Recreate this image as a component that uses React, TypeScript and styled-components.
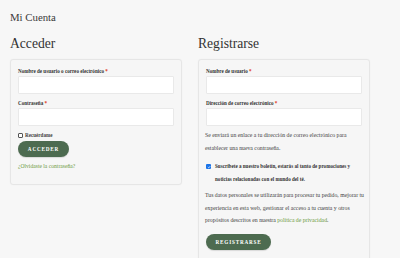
import React from "react";
import styled, { createGlobalStyle } from "styled-components";

const Global = createGlobalStyle`
  html, body { margin: 0; padding: 0; background: #f7f7f7; }
  body { font-family: "Liberation Serif", "DejaVu Serif", serif; color: #444; }
  * { box-sizing: border-box; }
`;

const Page = styled.div`
  padding: 11px 10px 0 10px;
  width: 400px;
  height: 258px;
  overflow: hidden;
`;

const PageTitle = styled.h1`
  margin: 0;
  font-size: 10.8px;
  line-height: 12px;
  font-weight: 400;
  color: #3a3a3a;
`;

const Columns = styled.div`
  display: grid;
  grid-template-columns: 172px 172px;
  column-gap: 16px;
  margin-top: 13px;
`;

const Column = styled.section`
  display: flex;
  flex-direction: column;
`;

const Heading = styled.h2`
  margin: 0;
  font-size: 13.6px;
  line-height: 16px;
  font-weight: 400;
  color: #333;
  height: 23px;
`;

const Card = styled.div`
  border: 1px solid #e6e6e6;
  border-radius: 3px;
  background: #f6f6f6;
  box-shadow: 0 0 2px rgba(0, 0, 0, 0.03);
  padding: 7px 7px 14px 7px;
  display: flex;
  flex-direction: column;
`;

const Label = styled.label<{ $first?: boolean }>`
  display: block;
  font-size: 5.1px;
  line-height: 8px;
  font-weight: 700;
  color: #333;
  margin-top: ${(p) => (p.$first ? "0" : "5px")};
  margin-bottom: 1px;
`;

const Req = styled.span`
  color: #e2401c;
`;

const Input = styled.div`
  height: 18px;
  background: #fff;
  border: 1px solid #e9e9e9;
  border-radius: 1px;
`;

const CheckRow = styled.label`
  display: flex;
  align-items: center;
  gap: 2px;
  font-size: 5.1px;
  line-height: 8px;
  font-weight: 700;
  color: #444;
  margin-top: 5px;
`;

const Box = styled.span<{ $checked?: boolean }>`
  width: 5px;
  height: 5px;
  flex: none;
  border-radius: 1px;
  border: ${(p) => (p.$checked ? "none" : "0.8px solid #555")};
  background: ${(p) => (p.$checked ? "#1a73e8" : "#fff")};
  display: inline-flex;
  align-items: center;
  justify-content: center;
`;

const Button = styled.button<{ $w: number; $mt: number }>`
  width: ${(p) => p.$w}px;
  height: 16px;
  margin-top: ${(p) => p.$mt}px;
  border: none;
  border-radius: 8px;
  background: #4d6b50;
  color: #fff;
  font-family: "Liberation Serif", serif;
  font-weight: 700;
  font-size: 5.2px;
  letter-spacing: 0.8px;
  text-transform: uppercase;
  padding: 0;
  box-shadow: 0 1px 1px rgba(0, 0, 0, 0.12);
`;

const Link = styled.a`
  color: #6d9a3d;
  text-decoration: none;
`;

const LostLink = styled(Link)`
  font-size: 5.6px;
  line-height: 8px;
  margin-top: 5px;
  display: block;
`;

const Para = styled.p<{ $lh: number; $mt: number }>`
  margin: ${(p) => p.$mt}px -2px 0 -1px;
  font-size: 5.75px;
  line-height: ${(p) => p.$lh}px;
  color: #444;
  white-space: nowrap;
`;

const SubscribeRow = styled.div`
  display: flex;
  align-items: flex-start;
  margin-top: 5px;
`;

const SubscribeBox = styled.div`
  height: 13px;
  width: 9px;
  flex: none;
  display: flex;
  align-items: center;
`;

const SubscribeText = styled.span`
  font-size: 5.1px;
  line-height: 13px;
  font-weight: 700;
  color: #333;
  white-space: nowrap;
`;

const Check = () => (
  <svg width="4" height="4" viewBox="0 0 10 10">
    <path d="M2 5.2 L4.2 7.3 L8.2 2.8" stroke="#fff" strokeWidth="1.8" fill="none" />
  </svg>
);

export default function App() {
  return (
    <Page>
      <Global />
      <PageTitle>Mi Cuenta</PageTitle>
      <Columns>
        <Column>
          <Heading>Acceder</Heading>
          <Card>
            <Label $first>
              Nombre de usuario o correo electrónico <Req>*</Req>
            </Label>
            <Input />
            <Label>
              Contraseña <Req>*</Req>
            </Label>
            <Input />
            <CheckRow>
              <Box />
              Recuérdame
            </CheckRow>
            <Button $w={51} $mt={2}>Acceder</Button>
            <LostLink href="#">¿Olvidaste la contraseña?</LostLink>
          </Card>
        </Column>
        <Column>
          <Heading>Registrarse</Heading>
          <Card>
            <Label $first>
              Nombre de usuario <Req>*</Req>
            </Label>
            <Input />
            <Label>
              Dirección de correo electrónico <Req>*</Req>
            </Label>
            <Input />
            <Para $lh={13} $mt={3}>
              Se enviará un enlace a tu dirección de correo electrónico para
              <br />
              establecer una nueva contraseña.
            </Para>
            <SubscribeRow>
              <SubscribeBox>
                <Box $checked>
                  <Check />
                </Box>
              </SubscribeBox>
              <SubscribeText>
                Suscríbete a nuestro boletín, estarás al tanto de promociones y
                <br />
                noticias relacionadas con el mundo del té.
              </SubscribeText>
            </SubscribeRow>
            <Para $lh={12.5} $mt={3}>
              Tus datos personales se utilizarán para procesar tu pedido, mejorar tu
              <br />
              experiencia en esta web, gestionar el acceso a tu cuenta y otros
              <br />
              propósitos descritos en nuestra <Link href="#">política de privacidad</Link>.
            </Para>
            <Button $w={65} $mt={7}>Registrarse</Button>
          </Card>
        </Column>
      </Columns>
    </Page>
  );
}
